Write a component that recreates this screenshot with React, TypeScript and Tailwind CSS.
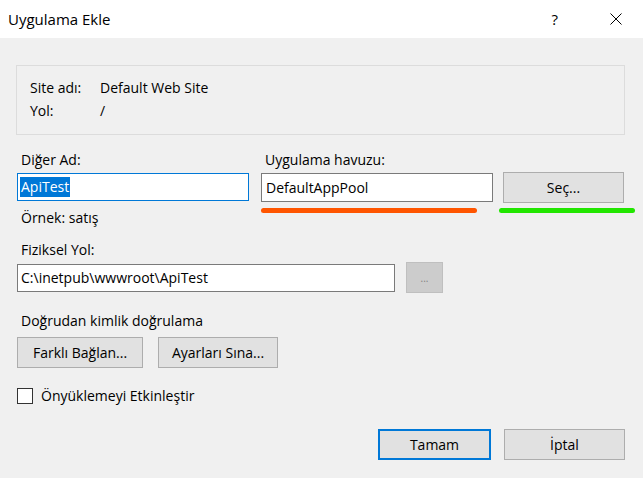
const font = { fontFamily: '"Open Sans", "Noto Sans", sans-serif' }

const App = () => {
    return (
        <div className="w-[643px] h-[478px] flex flex-col bg-[#f0f0f0] text-black text-[14px] overflow-hidden" style={font}>
            {/* Title bar */}
            <div className="h-[38px] bg-white flex items-center pl-[8px] shrink-0">
                <span className="text-[15px] leading-none">Uygulama Ekle</span>
                <span className="ml-auto text-[15px] leading-none">?</span>
                <svg className="ml-[52px] mr-[21px]" width="12" height="12" viewBox="0 0 12 12">
                    <path d="M0.5 0.5 L11.5 11.5 M11.5 0.5 L0.5 11.5" stroke="#000" strokeWidth="1" fill="none" />
                </svg>
            </div>

            <div className="flex flex-col pl-[17px] leading-[20px]">
                {/* Site info */}
                <div className="mt-[27px] -ml-px w-[609px] h-[70px] border border-[#dcdcdc] pl-[13px] pt-[10px] leading-[23px]">
                    <div className="flex">
                        <span className="w-[70px]">Site adı:</span>
                        <span>Default Web Site</span>
                    </div>
                    <div className="flex">
                        <span className="w-[70px]">Yol:</span>
                        <span>/</span>
                    </div>
                </div>

                {/* Name / pool row */}
                <div className="mt-[15px] flex items-start">
                    <div className="w-[232px] flex flex-col">
                        <span className="pl-[4px]">Diğer Ad:</span>
                        <div className="mt-[3px] h-[28px] border border-[#0078d7] bg-white flex items-center pl-[2px]">
                            <span className="bg-[#0078d7] text-white px-px leading-[20px]">ApiTest</span>
                        </div>
                        <span className="mt-[7px] pl-[4px]">Örnek: satış</span>
                    </div>
                    <div className="ml-[12px] w-[232px] flex flex-col">
                        <span className="pl-[4px]">Uygulama havuzu:</span>
                        <div className="mt-[3px] h-[29px] border border-[#7a7a7a] bg-white flex items-center pl-[4px]">
                            DefaultAppPool
                        </div>
                        <div className="mt-[6px] w-[216px] h-[5px] rounded-full bg-[#ff5500]" />
                    </div>
                    <div className="ml-[10px] flex flex-col">
                        <div className="h-[22px]" />
                        <button className="w-[121px] h-[31px] bg-[#e1e1e1] border border-[#adadad] flex items-center justify-center">
                            Seç...
                        </button>
                        <div className="mt-[5px] -ml-[4px] w-[136px] h-[5px] rounded-full bg-[#22e600]" />
                    </div>
                </div>

                {/* Physical path */}
                <span className="mt-[12px] pl-[4px]">Fiziksel Yol:</span>
                <div className="mt-[2px] flex items-center">
                    <div className="w-[378px] h-[28px] border border-[#7a7a7a] bg-white flex items-center pl-[3px]">
                        C:\inetpub\wwwroot\ApiTest
                    </div>
                    <div className="ml-[11px] w-[37px] h-[31px] bg-[#cccccc] border border-[#bfbfbf] flex items-center justify-center text-[#838383] text-[10px]">
                        ...
                    </div>
                </div>

                {/* Auth */}
                <span className="mt-[18px] pl-[4px]">Doğrudan kimlik doğrulama</span>
                <div className="mt-[6px] flex">
                    <button className="w-[126px] h-[31px] bg-[#e1e1e1] border border-[#adadad] flex items-center justify-center">
                        Farklı Bağlan...
                    </button>
                    <button className="ml-[15px] w-[120px] h-[31px] bg-[#e1e1e1] border border-[#adadad] flex items-center justify-center">
                        Ayarları Sına...
                    </button>
                </div>

                {/* Preload */}
                <label className="mt-[20px] flex items-center h-[16px]">
                    <span className="w-[16px] h-[16px] border border-[#333333] bg-white" />
                    <span className="ml-[8px]">Önyüklemeyi Etkinleştir</span>
                </label>

                {/* Footer */}
                <div className="mt-[25px] flex pl-[361px]">
                    <button className="w-[113px] h-[31px] bg-[#e1e1e1] border-2 border-[#0078d7] flex items-center justify-center">
                        Tamam
                    </button>
                    <button className="ml-[13px] w-[121px] h-[31px] bg-[#e1e1e1] border border-[#adadad] flex items-center justify-center">
                        İptal
                    </button>
                </div>
            </div>
        </div>
    )
}

export default App
